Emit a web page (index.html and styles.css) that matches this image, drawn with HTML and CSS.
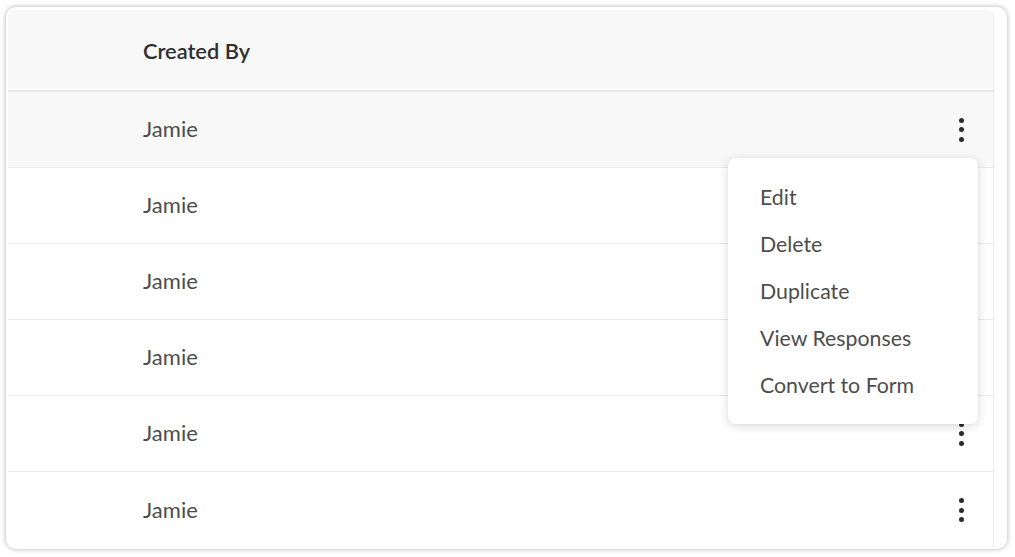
FILE: index.html
```html
<!DOCTYPE html>
<html>
<head>
<meta charset="utf-8">
<link rel="stylesheet" href="styles.css">
</head>
<body>
<div class="card">
  <div class="table">
    <div class="head">
      <div class="cell">Created By</div>
    </div>
    <div class="row hover"><div class="cell">Jamie</div><button class="kebab"><i></i><i></i><i></i></button></div>
    <div class="row"><div class="cell">Jamie</div><button class="kebab"><i></i><i></i><i></i></button></div>
    <div class="row"><div class="cell">Jamie</div><button class="kebab"><i></i><i></i><i></i></button></div>
    <div class="row"><div class="cell">Jamie</div><button class="kebab"><i></i><i></i><i></i></button></div>
    <div class="row"><div class="cell">Jamie</div><button class="kebab"><i></i><i></i><i></i></button></div>
    <div class="row last"><div class="cell">Jamie</div><button class="kebab"><i></i><i></i><i></i></button></div>
  </div>
  <ul class="menu">
    <li>Edit</li>
    <li>Delete</li>
    <li>Duplicate</li>
    <li>View Responses</li>
    <li>Convert to Form</li>
  </ul>
</div>
</body>
</html>
```

FILE: styles.css
```css
html, body {
  margin: 0;
  padding: 0;
  background: #ffffff;
}
body {
  font-family: Lato, "Open Sans", sans-serif;
  padding: 7px 8px 8px 6px;
}
.card {
  position: relative;
  height: 542px;
  box-sizing: border-box;
  background: #fff;
  border-radius: 10px;
  box-shadow: 0 0 5px rgba(0,0,0,0.32);
  padding: 3px 13px 2px 2px;
  overflow: hidden;
}
.table {
  height: 100%;
  box-sizing: border-box;
  border-right: 1px solid #ececec;
  border-radius: 8px 8px 0 8px;
  overflow: hidden;
}
.head {
  height: 82px;
  box-sizing: border-box;
  background: #f8f8f8;
  border-bottom: 2px solid #e8e8e8;
  display: flex;
  align-items: center;
}
.head .cell {
  font-size: 21.8px;
  font-weight: 600;
  color: #2f2f2f;
  padding-left: 135px;
  padding-top: 1px;
}
.row {
  height: 76px;
  box-sizing: border-box;
  border-bottom: 1px solid #e9e9e9;
  display: flex;
  align-items: center;
  justify-content: space-between;
}
.row.last { border-bottom: none; }
.row.hover { background: #f8f8f8; }
.row .cell {
  font-size: 22px;
  color: #4d4d4d;
  padding-left: 135px;
  padding-bottom: 2px;
}
.kebab {
  border: none;
  background: none;
  padding: 0;
  margin-right: 29px;
  width: 5px;
  display: flex;
  flex-direction: column;
  gap: 4.5px;
  cursor: pointer;
}
.kebab i {
  display: block;
  width: 5px;
  height: 5px;
  border-radius: 50%;
  background: #2b2b2b;
}
.menu {
  position: absolute;
  left: 722px;
  top: 151px;
  width: 250px;
  height: 266px;
  box-sizing: border-box;
  margin: 0;
  list-style: none;
  background: #fff;
  border-radius: 8px;
  box-shadow: 0 2px 10px rgba(0,0,0,0.16);
  padding: 16px 0 0 32px;
}
.menu li {
  font-size: 21.3px;
  color: #4d4d4d;
  height: 47px;
  line-height: 47px;
}
```
